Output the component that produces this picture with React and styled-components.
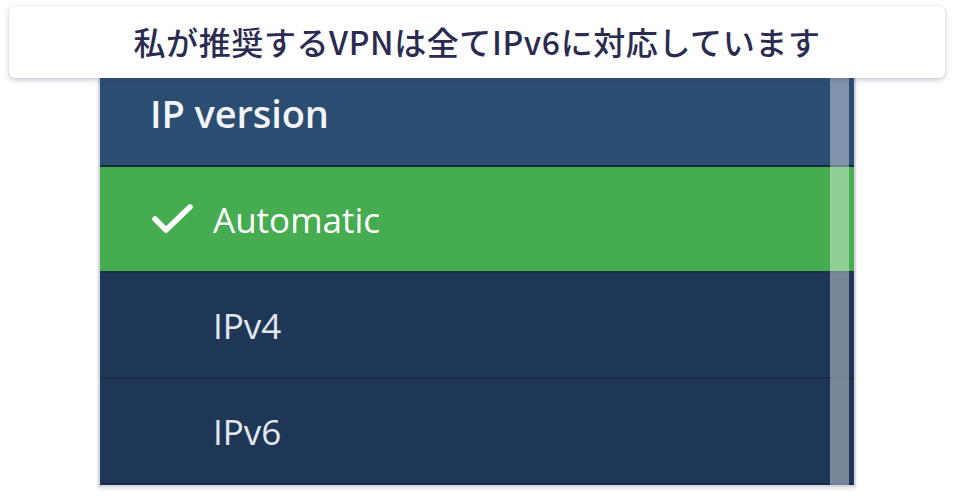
import React from "react"
import styled, { createGlobalStyle } from "styled-components"

const Global = createGlobalStyle`
body {
    margin: 0;
    background: #ffffff;
}
`

const Page = styled.div`
width: 956px;
height: 496px;
overflow: hidden;
display: flex;
flex-direction: column;
`

const Caption = styled.div`
position: relative;
z-index: 1;
margin: 6px 11px 0 9px;
height: 72px;
border-radius: 6px;
background: #ffffff;
box-shadow: 0 2px 5px rgba(70, 70, 110, 0.3), 0 0 1px rgba(70, 70, 110, 0.2);
display: flex;
align-items: center;
justify-content: center;
padding-bottom: 3px;
box-sizing: border-box;
font-family: "Noto Sans CJK JP", "Noto Sans", sans-serif;
font-weight: 500;
font-size: 32px;
color: #2b2b52;
letter-spacing: 0.6px;
`

const Panel = styled.div`
position: relative;
margin-left: 98px;
width: 754px;
border: 2px solid #d6d7e0;
border-top: none;
box-shadow: 0 2px 4px rgba(40, 40, 80, 0.12);
font-family: "Open Sans", "Noto Sans", sans-serif;
`

const Header = styled.div`
height: 89px;
box-sizing: border-box;
padding: 9px 0 0 50px;
background: #2b4d72;
border-bottom: 2px solid #17283d;
color: #f2f4f7;
font-size: 38px;
font-weight: 600;
letter-spacing: -0.1px;
`

const Row = styled.div`
height: 104px;
display: flex;
align-items: center;
gap: 20px;
padding-left: ${p => (p.checked ? 52 : 113)}px;
background: ${p => (p.checked ? "#45ad4f" : "#1f3756")};
border-bottom: 2px solid ${p => (p.checked ? "#1a2e48" : "#192d46")};
color: ${p => (p.checked ? "#ffffff" : "#e4e8ee")};
font-size: 35px;
`

const Scrollbar = styled.div`
position: absolute;
top: 0;
bottom: 0;
right: 5px;
width: 19px;
background: rgba(255, 255, 255, 0.4);
`

const Check = () => (
    <svg width="41" height="30" viewBox="0 0 41 30">
        <path d="M3 15 L14 26 L38 3" fill="none" stroke="#ffffff" strokeWidth="5.5" strokeLinecap="round" strokeLinejoin="round" />
    </svg>
)

const options = ["Automatic", "IPv4", "IPv6"]

const App = () => (
    <Page>
        <Global />
        <Caption>私が推奨するVPNは全てIPv6に対応しています</Caption>
        <Panel>
            <Header>IP version</Header>
            {options.map((o, i) => (
                <Row key={o} checked={i === 0}>
                    {i === 0 && <Check />}
                    {o}
                </Row>
            ))}
            <Scrollbar />
        </Panel>
    </Page>
)

export default App
